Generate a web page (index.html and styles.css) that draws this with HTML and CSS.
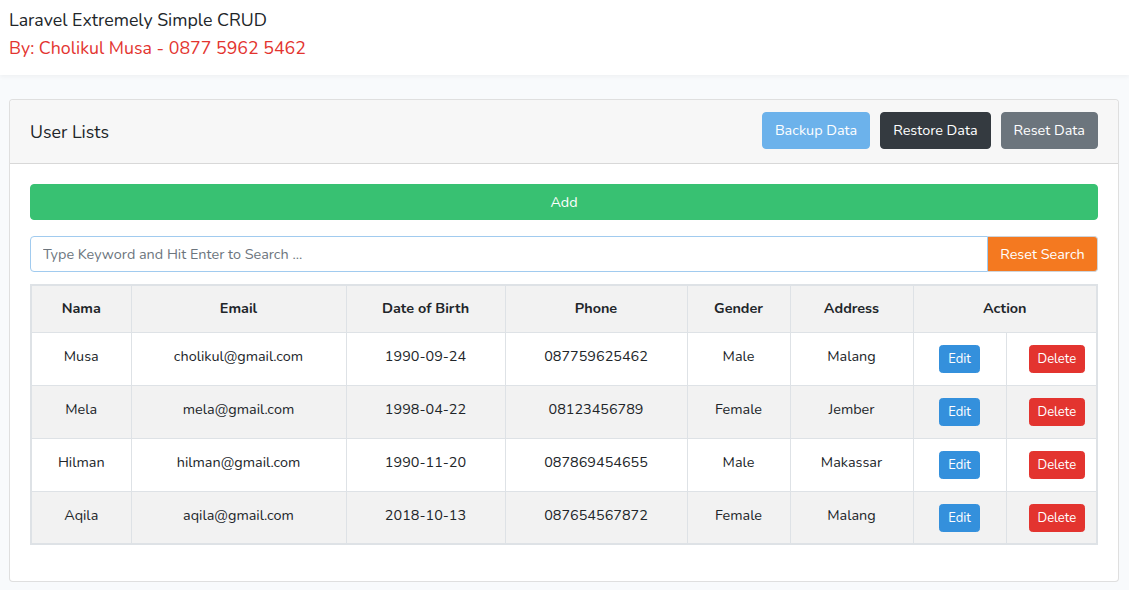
FILE: index.html
```html
<!DOCTYPE html>
<html lang="en">
<head>
<meta charset="utf-8">
<title>Laravel Extremely Simple CRUD</title>
<link rel="stylesheet" href="styles.css">
</head>
<body>
<header class="topbar">
  <div class="brand">Laravel Extremely Simple CRUD</div>
  <div class="author">By: Cholikul Musa - 0877 5962 5462</div>
</header>
<main class="main">
  <section class="card">
    <div class="card-header">
      <h1 class="card-title">User Lists</h1>
      <div class="actions">
        <button class="btn btn-info">Backup Data</button>
        <button class="btn btn-dark">Restore Data</button>
        <button class="btn btn-secondary">Reset Data</button>
      </div>
    </div>
    <div class="card-body">
      <button class="btn btn-success btn-block">Add</button>
      <div class="input-group">
        <input class="form-control" type="text" placeholder="Type Keyword and Hit Enter to Search ..." autofocus>
        <button class="btn btn-orange">Reset Search</button>
      </div>
      <table class="table">
        <colgroup>
          <col class="c-name"><col class="c-email"><col class="c-dob"><col class="c-phone"><col class="c-gender"><col class="c-address"><col class="c-edit"><col class="c-del">
        </colgroup>
        <tbody>
          <tr class="head">
            <th>Nama</th><th>Email</th><th>Date of Birth</th><th>Phone</th><th>Gender</th><th>Address</th><th colspan="2">Action</th>
          </tr>
          <tr>
            <td>Musa</td><td>cholikul@gmail.com</td><td>1990-09-24</td><td>087759625462</td><td>Male</td><td>Malang</td>
            <td><button class="btn btn-sm btn-primary">Edit</button></td><td><button class="btn btn-sm btn-danger">Delete</button></td>
          </tr>
          <tr class="alt">
            <td>Mela</td><td>mela@gmail.com</td><td>1998-04-22</td><td>08123456789</td><td>Female</td><td>Jember</td>
            <td><button class="btn btn-sm btn-primary">Edit</button></td><td><button class="btn btn-sm btn-danger">Delete</button></td>
          </tr>
          <tr>
            <td>Hilman</td><td>hilman@gmail.com</td><td>1990-11-20</td><td>087869454655</td><td>Male</td><td>Makassar</td>
            <td><button class="btn btn-sm btn-primary">Edit</button></td><td><button class="btn btn-sm btn-danger">Delete</button></td>
          </tr>
          <tr class="alt">
            <td>Aqila</td><td>aqila@gmail.com</td><td>2018-10-13</td><td>087654567872</td><td>Female</td><td>Malang</td>
            <td><button class="btn btn-sm btn-primary">Edit</button></td><td><button class="btn btn-sm btn-danger">Delete</button></td>
          </tr>
        </tbody>
      </table>
    </div>
  </section>
</main>
</body>
</html>
```

FILE: styles.css
```css
* { box-sizing: border-box; }
html, body { margin: 0; padding: 0; }
body {
  background: #f8fafc;
  font-family: "Nunito", "Lato", "Noto Sans", sans-serif;
  font-size: 14.4px;
  line-height: 1.6;
  color: #212529;
}
.topbar {
  background: #fff;
  height: 75px;
  padding: 6px 9px 0;
  box-shadow: 0 2px 4px rgba(0,0,0,0.04);
}
.brand { font-size: 17.8px; line-height: 28px; color: #212529; }
.author { font-size: 17.8px; line-height: 28px; color: #e3342f; }
.main { padding: 24px 10px 8px 9px; }
.card {
  background: #fff;
  border: 1px solid rgba(0,0,0,0.125);
  border-radius: 4px;
}
.card-header {
  display: flex;
  align-items: center;
  justify-content: space-between;
  height: 64px;
  padding: 0 20px;
  background: #f7f7f7;
  border-bottom: 1px solid rgba(0,0,0,0.125);
  border-radius: 4px 4px 0 0;
}
.card-title { margin: 0; font-size: 17.8px; font-weight: 400; padding-top: 2px; }
.actions { display: flex; gap: 10px; padding-bottom: 2px; }
.btn {
  font-family: inherit;
  font-size: 14.4px;
  line-height: 23px;
  padding: 6px 12px;
  border: 1px solid transparent;
  border-radius: 4px;
  color: #fff;
  cursor: pointer;
}
.btn-info { background: #6cb2eb; border-color: #6cb2eb; }
.btn-dark { background: #343a40; border-color: #343a40; }
.btn-secondary { background: #6c757d; border-color: #6c757d; }
.btn-success { background: #38c172; border-color: #38c172; }
.btn-primary { background: #3490dc; border-color: #3490dc; }
.btn-danger { background: #e3342f; border-color: #e3342f; }
.btn-block { display: block; width: 100%; height: 36px; padding: 0; }
.card-body { padding: 20px; }
.input-group { display: flex; margin-top: 16px; height: 36px; }
.form-control {
  flex: 1;
  font-family: inherit;
  font-size: 14.4px;
  padding: 6px 12px;
  border: 1px solid #a1cbef;
  border-radius: 4px 0 0 4px;
  color: #495057;
  outline: none;
}
.form-control::placeholder { color: #6c757d; opacity: 1; }
.btn-orange {
  width: 110px;
  background: #f47920;
  border: 1px solid #ced4da;
  border-left: none;
  border-radius: 0 4px 4px 0;
  padding: 0;
}
.table {
  width: 100%;
  margin: 12px 0 16px;
  border-collapse: collapse;
  table-layout: fixed;
  border: 2px solid #dee2e6;
}
.c-name { width: 100px; }
.c-email { width: 215px; }
.c-dob { width: 159px; }
.c-phone { width: 182px; }
.c-gender { width: 103px; }
.c-address { width: 123px; }
.c-edit { width: 93px; }
.c-del { width: 91px; }
.table th, .table td {
  border: 1px solid #dee2e6;
  padding: 12px 12px 0;
  text-align: center;
  vertical-align: top;
}
.table th { font-weight: 700; height: 47px; padding-top: 11px; }
.table td { height: 53px; }
.head, .alt { background: #f2f2f2; }
.btn-sm {
  font-size: 13px;
  line-height: 18px;
  padding: 4px 8px;
  border-radius: 3.5px;
}
.btn-sm.btn-danger { margin-left: 10px; }
```
